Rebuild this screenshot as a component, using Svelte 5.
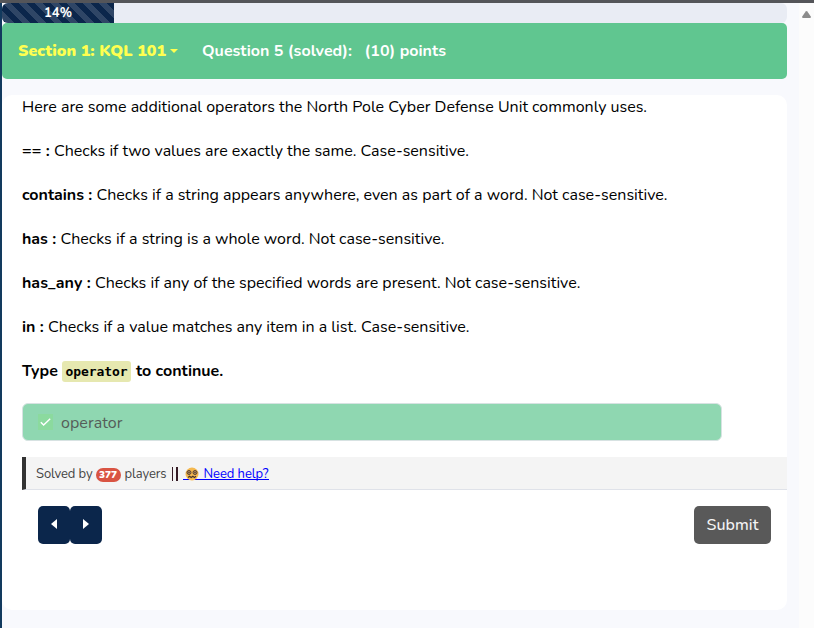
<script>
  const operators = [
    { name: '== :', nameWidth: 32, text: 'Checks if two values are exactly the same. Case-sensitive.', width: 415 },
    { name: 'contains :', nameWidth: 74.5, text: 'Checks if a string appears anywhere, even as part of a word. Not case-sensitive.', width: 571 },
    { name: 'has :', nameWidth: 38.5, text: 'Checks if a string is a whole word. Not case-sensitive.', width: 384 },
    { name: 'has_any :', nameWidth: 73, text: 'Checks if any of the specified words are present. Not case-sensitive.', width: 485.3 },
    { name: 'in :', nameWidth: 26, text: 'Checks if a value matches any item in a list. Case-sensitive.', width: 421.5 }
  ];

  // Tracks a run of text out to a set measure.
  function fit(node, width) {
    const natural = node.getBoundingClientRect().width;
    const count = [...node.textContent].length;
    node.style.letterSpacing = (width - natural) / count + 'px';
  }
</script>

<div class="window">
  <div class="topline"></div>
  <div class="body">
    <div class="edge"></div>
    <main>
      <div class="progress"><div class="bar"><span use:fit={28}>14%</span></div></div>
      <header>
        <span class="section"><span use:fit={148}>Section 1: KQL 101</span><i class="caret"></i></span>
        <span class="question" use:fit={150}>Question 5 (solved):</span>
        <span class="points" use:fit={81.5}>(10) points</span>
      </header>
      <section class="card">
        <div class="copy">
          <p><span use:fit={625}>Here are some additional operators the North Pole Cyber Defense Unit commonly uses.</span></p>
          {#each operators as op}
            <p><b use:fit={op.nameWidth}>{op.name + ' '}</b><span use:fit={op.width}>{op.text}</span></p>
          {/each}
          <p class="type"><b use:fit={36}>Type</b><code><span use:fit={62}>operator</span></code><b use:fit={87.2}>to continue.</b></p>
        </div>
        <div class="answer">
          <span class="check"><svg width="16" height="16" viewBox="0 0 16 16"><path d="M3 8.2 6 11.2 13 4.5" fill="none" stroke="#fff" stroke-width="1.5" /></svg></span>
          <span class="value" use:fit={61.5}>operator</span>
        </div>
        <div class="solved">
          <span use:fit={56.5}>Solved by</span>
          <span class="badge"><span use:fit={18}>377</span></span>
          <span use:fit={42}>players</span>
          <span class="pipes"><i></i><i></i></span>
          <a href="#help">
            <svg width="14" height="14" viewBox="0 0 14 14">
              <circle cx="7" cy="7" r="6.5" fill="#f4b84f" />
              <g fill="#b98f55" stroke="#594333" stroke-width="1">
                <circle cx="4" cy="5.5" r="2" /><circle cx="10" cy="5.5" r="2" />
              </g>
              <circle cx="4" cy="5.5" r=".7" fill="#3f3028" /><circle cx="10" cy="5.5" r=".7" fill="#3f3028" />
              <path d="M3 10.5 4.6 9.3 6.2 10.5 7.8 9.3 9.4 10.5 11 9.3" fill="none" stroke="#3f3028" stroke-width="1.1" />
            </svg><span use:fit={65}>Need help?</span>
          </a>
        </div>
        <div class="actions">
          <button aria-label="Previous"><svg width="6" height="10" viewBox="0 0 6 10"><path d="M6 0V10L0 5Z" fill="#fff" /></svg></button>
          <button aria-label="Next"><svg width="6" height="10" viewBox="0 0 6 10"><path d="M0 0V10L6 5Z" fill="#fff" /></svg></button>
          <button class="submit"><span use:fit={52}>Submit</span></button>
        </div>
      </section>
    </main>
    <div class="scroll"><svg width="9" height="7" viewBox="0 0 9 7"><path d="M3.7.5Q4.5-.3 5.3.5L8.8 5.4Q9.2 7 8 7H1Q-.2 7 .2 5.4Z" fill="#8b8b8b" /></svg></div>
  </div>
</div>

<style>
  :global(body) { background: #f8f9fd; }
  .window {
    width: 814px; height: 628px; overflow: hidden;
    display: flex; flex-direction: column;
    font-family: Nunito, Lato, "Open Sans", sans-serif;
    font-size: 16px; line-height: 24px; color: #000;
    background: #f8f9fd;
  }
  span, b { white-space: pre; }
  .topline { height: 3px; background: #545559; flex: none; }
  .body { flex: 1; display: flex; }
  .edge { width: 2px; background: #123a5e; }
  main { width: 785px; }
  .progress { height: 20px; background: #e9ecf4; border-radius: 6px; overflow: hidden; }
  .bar {
    width: 112px; height: 20px; display: flex; justify-content: center; align-items: center;
    font-size: 13px; line-height: 20px; font-weight: 700; color: #fff;
    background: linear-gradient(45deg, rgba(255,255,255,.15) 25%, transparent 25%, transparent 50%, rgba(255,255,255,.15) 50%, rgba(255,255,255,.15) 75%, transparent 75%) 0 0 / 16px 16px #0b264b;
  }
  header {
    height: 56px; box-sizing: border-box; padding-left: 16px; border-radius: 5px;
    display: flex; align-items: center; background: #60c690; color: #fff; font-weight: 700;
  }
  .section { width: 184px; display: flex; align-items: center; color: #ffff50; font-weight: 900; }
  .caret { margin-left: 4px; border: 4px solid transparent; border-top-color: #ffff50; border-bottom: 0; }
  .points { margin-left: 12.5px; }
  .card { height: 515px; margin-top: 16px; background: #fff; border-radius: 10px; display: flex; flex-direction: column; }
  .copy { padding-left: 20px; display: flex; flex-direction: column; gap: 20px; }
  p { margin: 0; height: 24px; display: flex; align-items: center; }
  .type code {
    height: 21px; width: 69px; margin: 0 5px 0 4px; display: flex; align-items: center; justify-content: center;
    font: 700 13px/21px "DejaVu Sans Mono", monospace; background: #e6e8b0; border-radius: 3px;
  }
  .answer {
    box-sizing: border-box; width: 700px; height: 38px; margin: 20px 0 0 20px; padding-left: 15px;
    display: flex; align-items: center; gap: 8px; color: #555e59;
    background: #8fd7b1; border: 1px solid #d7e2e2; border-radius: 6px;
  }
  .value { padding-top: 2px; }
  .check { width: 15px; height: 16px; display: flex; background: #8bda9e; }
  .solved {
    box-sizing: border-box; height: 33px; margin: 16px 0 0 20px; padding: 2px 0 0 10px;
    display: flex; align-items: center; font-size: 13px; color: #444;
    background: #f4f4f4; border-left: 4px solid #333; border-bottom: 1px solid #dfe2e9;
  }
  .badge {
    width: 25px; height: 14px; margin: 1px 4px 0 3px; border-radius: 7px; background: #d95443;
    display: flex; align-items: center; justify-content: center;
    font-size: 10px; line-height: 14px; font-weight: 900; color: #fff;
  }
  .pipes { display: flex; gap: 3px; margin: 0 5px 0 5px; }
  .pipes i { width: 1.5px; height: 14px; background: #351b25; }
  .solved a {
    height: 14px; display: flex; align-items: center; gap: 5px; padding-left: 2px;
    color: #00f; line-height: 14px; text-decoration: none;
    background: linear-gradient(#00f, #00f) 0 12px / 100% 1px no-repeat;
  }
  .actions { display: flex; padding: 16px 16px 0 36px; }
  button {
    width: 32px; height: 38px; padding: 0 0 2px; border: 0; border-radius: 5px; background: #0b264b;
    display: flex; align-items: center; justify-content: center; font: inherit;
  }
  .submit { width: 77px; margin-left: auto; padding: 0; background: #595959; color: #f4f4f4; font-weight: 500; }
  .scroll { width: 15px; margin-left: auto; background: #fcfcfc; display: flex; justify-content: center; padding-top: 8px; box-sizing: border-box; }
</style>
